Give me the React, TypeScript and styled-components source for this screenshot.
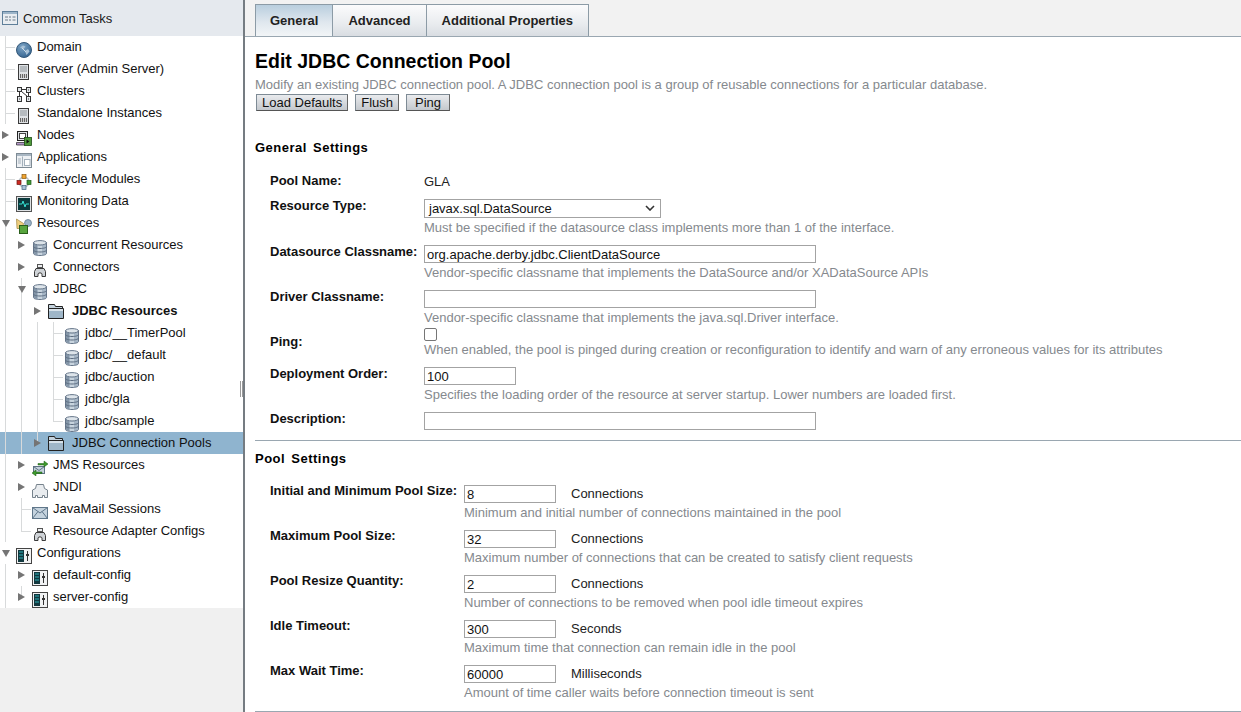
import React from "react";
import styled, { createGlobalStyle } from "styled-components";

const GlobalStyle = createGlobalStyle`
  html, body {
    margin: 0;
    padding: 0;
    height: 100%;
    overflow: hidden;
    background: #fff;
  }
  body {
    font-family: "Liberation Sans", Arial, sans-serif;
    font-size: 13px;
    color: #000;
  }
`;

const Page = styled.div`
  display: flex;
  width: 1241px;
  height: 712px;
  overflow: hidden;
`;

const Sidebar = styled.aside`
  width: 243px;
  flex: none;
  background: #f0f0f0;
  border-right: 2px solid #757c82;
  position: relative;
`;

const Grip = styled.i`
  position: absolute;
  right: 0;
  top: 381px;
  width: 1px;
  height: 16px;
  border-left: 1px solid #9a9a9a;
  border-right: 1px solid #9a9a9a;
  background: #fff;
`;

const TasksHeader = styled.div`
  height: 36px;
  display: flex;
  align-items: center;
  gap: 5px;
  padding-left: 2px;
  background: #e5e9ee;
  color: #1a1a1a;
`;

const Tree = styled.ul`
  list-style: none;
  margin: 0;
  padding: 0;
  background: #fff;
`;

const Row = styled.li<{ $selected?: boolean; $indent: number }>`
  position: relative;
  height: 22px;
  display: flex;
  align-items: flex-start;
  padding-left: ${({ $indent }) => $indent}px;
  background: ${({ $selected }) => ($selected ? "#8fb4cf" : "transparent")};
`;

const RowLabel = styled.span<{ $bold?: boolean; $gap: number }>`
  margin-left: ${({ $gap }) => $gap}px;
  line-height: 21px;
  font-weight: ${({ $bold }) => ($bold ? 700 : 400)};
  color: #111;
  white-space: nowrap;
`;

const IconBox = styled.span<{ $top: number }>`
  width: 16px;
  height: 16px;
  flex: none;
  display: block;
  margin-top: ${({ $top }) => $top}px;
  svg {
    display: block;
  }
`;

const VLine = styled.i<{ $x: number; $half?: boolean }>`
  position: absolute;
  left: ${({ $x }) => $x}px;
  top: 0;
  width: 1px;
  height: ${({ $half }) => ($half ? "11px" : "22px")};
  background: #d8dadb;
`;

const HLine = styled.i<{ $x: number }>`
  position: absolute;
  left: ${({ $x }) => $x}px;
  top: 11px;
  width: 10px;
  height: 1px;
  background: #d8dadb;
`;

const Arrow = styled.i<{ $open?: boolean; $x: number }>`
  position: absolute;
  left: ${({ $x }) => $x}px;
  top: ${({ $open }) => ($open ? "8px" : "7px")};
  width: 0;
  height: 0;
  ${({ $open }) =>
    $open
      ? `border-left: 4px solid transparent;
         border-right: 4px solid transparent;
         border-top: 7px solid #757575;`
      : `border-top: 4px solid transparent;
         border-bottom: 4px solid transparent;
         border-left: 7px solid #757575;`}
`;

const Main = styled.main`
  flex: 1;
  min-width: 0;
`;

const TabBar = styled.div`
  height: 37px;
  box-sizing: border-box;
  padding: 4px 0 0 10px;
  background: #f2f2f2;
  border-bottom: 1px solid #9aa7b1;
  display: flex;
`;

const Tab = styled.div<{ $active?: boolean }>`
  height: 32px;
  box-sizing: border-box;
  padding: 0 ${({ $active }) => ($active ? 14 : 15)}px;
  display: flex;
  align-items: center;
  border: 1px solid #8c9ba6;
  border-bottom: 0;
  border-left-width: ${({ $active }) => ($active ? "1px" : "0")};
  font-size: 13px;
  font-weight: 700;
  color: #222;
  background: ${({ $active }) =>
    $active
      ? "linear-gradient(#b9cede, #dfe7ee 55%, #f2f5f7)"
      : "linear-gradient(#fbfbfc, #e9ecef 60%, #d9dde2)"};
`;

const Content = styled.div`
  padding: 0 0 0 10px;
`;

const Title = styled.h1`
  margin: 0;
  padding-top: 12px;
  height: 40px;
  box-sizing: border-box;
  font-size: 19.5px;
  line-height: 24px;
  font-weight: 700;
  color: #000;
`;

const Help = styled.div`
  font-size: 13px;
  line-height: 15px;
  color: #85898e;
  white-space: nowrap;
`;

const ButtonRow = styled.div`
  display: flex;
  gap: 7px;
  margin-top: 2px;
  padding-left: 1px;
`;

const Button = styled.div<{ $pad: number }>`
  height: 17px;
  box-sizing: border-box;
  padding: 0 ${({ $pad }) => $pad}px;
  display: flex;
  align-items: center;
  border: 1px solid #7e8b95;
  border-right-color: #666;
  border-bottom-color: #555;
  background: linear-gradient(#e9ebee, #c4c8cd);
  color: #111;
  font-size: 13px;
`;

const SectionTitle = styled.h2<{ $top: number }>`
  margin: ${({ $top }) => $top}px 0 0;
  font-size: 13px;
  line-height: 16px;
  font-weight: 700;
  letter-spacing: 0.5px;
  word-spacing: 2px;
  color: #000;
`;

const Rule = styled.hr<{ $top: number }>`
  margin: ${({ $top }) => $top}px 0 0;
  border: 0;
  height: 1px;
  background: #9aa7b1;
`;

const PropList = styled.div<{ $labelWidth: number; $top: number }>`
  display: grid;
  grid-template-columns: ${({ $labelWidth }) => $labelWidth}px 1fr;
  margin: ${({ $top }) => $top}px 0 0 15px;
`;

const PropLabel = styled.div<{ $h: number; $pad?: number }>`
  height: ${({ $h }) => $h}px;
  box-sizing: border-box;
  padding-top: ${({ $pad }) => $pad ?? 0}px;
  font-weight: 700;
  font-size: 13px;
  line-height: 15px;
  color: #111;
  white-space: nowrap;
`;

const PropValue = styled.div<{ $h: number; $pad?: number }>`
  height: ${({ $h }) => $h}px;
  padding-top: ${({ $pad }) => $pad ?? 1}px;
  box-sizing: border-box;
`;

const Plain = styled.div`
  font-size: 13px;
  line-height: 15px;
  color: #222;
`;

const Unit = styled(Plain)`
  margin-top: 1px;
`;

const TextBox = styled.div<{ $w: number; $h?: number }>`
  width: ${({ $w }) => $w}px;
  height: ${({ $h }) => $h ?? 18}px;
  box-sizing: border-box;
  border: 1px solid #a3a3a3;
  background: #fff;
  padding-left: 2px;
  margin-bottom: 2px;
  font-size: 13px;
  line-height: 17px;
  color: #111;
  white-space: nowrap;
`;

const SelectBox = styled(TextBox)`
  display: flex;
  align-items: center;
  justify-content: space-between;
  padding: 0 5px 1px 4px;
  svg {
    display: block;
  }
`;

const CheckBox = styled.div`
  width: 13px;
  height: 13px;
  box-sizing: border-box;
  border: 1px solid #767676;
  border-radius: 2px;
  background: #fff;
  margin-bottom: 1px;
`;

const Inline = styled.div`
  display: flex;
  align-items: flex-start;
  gap: 15px;
`;

const DbIcon = () => (
  <svg width="16" height="16" viewBox="0 0 16 16">
    <path d="M1.500 2.500v11c0 1.200 2.900 2 6.500 2s6.500-.8 6.500-2v-11z" fill="#a6b6c6" stroke="#66768a" />
    <path d="M2 4v9.500l3 1.500V5z" fill="#8496a8" />
    <path d="M6 5.500h4v9.500H6z" fill="#c8d4de" />
    <ellipse cx="8" cy="2.800" rx="6.500" ry="2.200" fill="#dde4ea" stroke="#66768a" />
    <path d="M1.500 6.500c0 1.200 2.900 2 6.500 2s6.500-.8 6.500-2M1.500 10c0 1.200 2.900 2 6.500 2s6.500-.8 6.500-2" fill="none" stroke="#5c6c80" />
  </svg>
);

const Globe = () => (
  <svg width="16" height="16" viewBox="0 0 16 16">
    <defs>
      <radialGradient id="globeFill" cx="0.400" cy="0.300" r="0.800">
        <stop offset="0" stopColor="#7ea5c6" />
        <stop offset="1" stopColor="#2f5f8c" />
      </radialGradient>
    </defs>
    <circle cx="8" cy="8" r="7.500" fill="url(#globeFill)" stroke="#35597a" />
    <path d="M4 5.500l3-2 2.500 1-2 2.500zM9 9l3-2 1.500 2.500-3 3.500z" fill="#a9c2d7" />
    <path d="M6 6l4 4" stroke="#cfdde8" />
  </svg>
);

const Server = () => (
  <svg width="16" height="16" viewBox="0 0 16 16">
    <rect x="2.500" y="0.500" width="10" height="15" fill="#dfe2e5" stroke="#3a3a3a" />
    <path d="M4 3h7M4 5h7M4 7h7" stroke="#8d9499" />
    <rect x="4" y="10" width="7" height="4" fill="#666" />
    <path d="M5.500 10v4M7.500 10v4M9.500 10v4" stroke="#cfcfcf" />
  </svg>
);

const ClustersIcon = () => (
  <svg width="16" height="16" viewBox="0 0 16 16">
    <g fill="#e3e7ea" stroke="#333">
      <rect x="1.500" y="1.500" width="4" height="4" />
      <rect x="10.500" y="1.500" width="4" height="5" />
      <rect x="1.500" y="10.500" width="4" height="5" />
      <rect x="10.500" y="10.500" width="4" height="5" />
    </g>
    <path d="M5.500 3.500h5M3.500 5.500v5M5.500 5.500l6 5M12.500 6.500v4M3 13h1M12 13h1M12 4h1" stroke="#333" fill="none" />
  </svg>
);

const NodesIcon = () => (
  <svg width="16" height="16" viewBox="0 0 16 16">
    <rect x="1.500" y="1.500" width="10" height="9" fill="#dfe3e6" stroke="#222" />
    <rect x="3.500" y="3.500" width="6" height="5" fill="#fff" stroke="#444" />
    <path d="M0.500 12.500h9v2.500h-9z" fill="#b59acb" stroke="#222" strokeWidth="0.700" />
    <rect x="8.500" y="7.500" width="7" height="8" fill="#4f9a3a" stroke="#1d4d16" strokeWidth="0.800" />
    <path d="M10.500 9.500l3 2-3 2z" fill="#111" />
  </svg>
);

const WindowIcon = () => (
  <svg width="16" height="16" viewBox="0 0 16 16">
    <rect x="0.500" y="1.500" width="15" height="14" fill="#eef1f4" stroke="#7e8b95" />
    <rect x="1" y="2" width="14" height="2" fill="#a9b7c3" />
    <path d="M6.500 4.500v10" stroke="#a3b0bb" />
    <path d="M2 7h3M2 9h3M2 11h3" stroke="#a3b0bb" />
    <rect x="8.500" y="7.500" width="5.500" height="6" fill="#fff" stroke="#a3b0bb" />
  </svg>
);

const LifecycleIcon = () => (
  <svg width="16" height="16" viewBox="0 0 16 16">
    <circle cx="8" cy="8" r="5" fill="none" stroke="#b8c0c6" strokeWidth="1.500" />
    <rect x="6" y="0.500" width="4" height="4" fill="#f0a430" stroke="#8a5b10" strokeWidth="0.700" />
    <rect x="1" y="6.500" width="4" height="4" fill="#cc2a22" stroke="#701410" strokeWidth="0.700" />
    <rect x="11" y="6.500" width="4" height="4" fill="#3f9a35" stroke="#1d5a18" strokeWidth="0.700" />
    <rect x="6" y="11.500" width="4" height="4" fill="#a9c2d7" stroke="#40607e" strokeWidth="0.700" />
  </svg>
);

const MonitorIcon = () => (
  <svg width="16" height="16" viewBox="0 0 16 16">
    <rect x="0.500" y="0.500" width="15" height="15" fill="#dfe2e5" stroke="#555" />
    <rect x="2" y="2" width="12" height="12" fill="#0c3a3d" />
    <path d="M3 8h3l1-3 2 6 1-3h3" fill="none" stroke="#35e0d0" />
  </svg>
);

const ResourcesIcon = () => (
  <svg width="16" height="16" viewBox="0 0 16 16">
    <path d="M0.500 1l7 4.500-1 5H1z" fill="#efcf80" stroke="#a2863c" strokeWidth="0.700" />
    <circle cx="12" cy="5" r="3.500" fill="#9ab3c8" stroke="#5d7488" strokeWidth="0.700" />
    <rect x="3.500" y="7.500" width="8" height="8" fill="#58a53e" stroke="#2a5f1b" />
  </svg>
);

const ConnectorIcon = () => (
  <svg width="16" height="16" viewBox="0 0 16 16">
    <rect x="5.500" y="2.500" width="5" height="3" fill="#eceef0" stroke="#555" />
    <path d="M2.500 14.500v-5l1.500-3h8l1.500 3v5h-3.500v-2.500c0-1.500-4-1.500-4 0v2.500z" fill="#cfd3d7" stroke="#3a3a3a" />
  </svg>
);

const FolderIcon = () => (
  <svg width="16" height="16" viewBox="0 0 16 16">
    <path d="M0.500 15V1.500h6l1 2h7v2" fill="#c4d2dd" stroke="#222" />
    <path d="M0.500 15.500V5.500h15v10z" fill="#9fb6c8" stroke="#222" />
    <rect x="1" y="6" width="14" height="2" fill="#d8e2ea" />
  </svg>
);

const JmsIcon = () => (
  <svg width="16" height="16" viewBox="0 0 16 16">
    <rect x="1.500" y="6.500" width="11" height="7" fill="#c5d2dc" stroke="#5f7384" />
    <path d="M1.500 6.500l5.500 4 5.500-4" fill="none" stroke="#5f7384" />
    <path d="M6 3.500h6V1l4 3-4 3V5H6zM10 13.500H4V16l-4-3 4-3v2h6z" fill="#3e9b2c" stroke="#1d5a14" strokeWidth="0.500" />
  </svg>
);

const JndiIcon = () => (
  <svg width="16" height="16" viewBox="0 0 16 16">
    <path d="M0.500 15.500V8l3-1.500 1-4h7l1 4 3 1.500v7.500h-3v-2h-2v2h-5v-2h-2v2z" fill="#e9ecef" stroke="#76828c" />
  </svg>
);

const MailIcon = () => (
  <svg width="16" height="16" viewBox="0 0 16 16">
    <rect x="0.500" y="3.500" width="15" height="11" fill="#c5d3de" stroke="#60778a" />
    <path d="M0.500 3.500L8 9l7.500-5.500M0.500 14.500L6 7.500M15.500 14.500L10 7.500" fill="none" stroke="#60778a" />
  </svg>
);

const ConfigIcon = () => (
  <svg width="16" height="16" viewBox="0 0 16 16">
    <rect x="0.500" y="0.500" width="15" height="15" fill="#f1f2f3" stroke="#444" />
    <rect x="2" y="2" width="6" height="12" fill="#12383f" />
    <path d="M3 4h4M3 7h4M3 10h4" stroke="#2fb0b8" />
    <path d="M11.500 3v10" stroke="#333" />
    <rect x="10" y="6" width="3" height="2" fill="#333" />
  </svg>
);

const TableIcon = () => (
  <svg width="16" height="16" viewBox="0 0 16 16">
    <rect x="0.500" y="1.500" width="15" height="13" fill="#e9edf1" stroke="#5f7f9a" />
    <rect x="1" y="2" width="14" height="2" fill="#9db5c9" />
    <path d="M3 7h3M7 7h2M10.500 7h3M3 10h3M7 10h2M10.500 10h3" stroke="#6b7b88" />
  </svg>
);

type TreeNode = {
  label: string;
  depth: number;
  icon: React.ReactNode;
  iconTop?: number;
  arrow?: "open" | "closed";
  bold?: boolean;
  selected?: boolean;
  lines?: number[];
  halfLines?: number[];
  branch?: number;
};

const nodes: TreeNode[] = [
  { label: "Domain", depth: 0, icon: <Globe />, lines: [5], branch: 5 },
  { label: "server (Admin Server)", depth: 0, icon: <Server />, lines: [5], branch: 5 },
  { label: "Clusters", depth: 0, icon: <ClustersIcon />, lines: [5], branch: 5 },
  { label: "Standalone Instances", depth: 0, icon: <Server />, lines: [5], branch: 5 },
  { label: "Nodes", depth: 0, icon: <NodesIcon />, arrow: "closed" },
  { label: "Applications", depth: 0, icon: <WindowIcon />, arrow: "closed" },
  { label: "Lifecycle Modules", depth: 0, icon: <LifecycleIcon />, lines: [5], branch: 5 },
  { label: "Monitoring Data", depth: 0, icon: <MonitorIcon />, lines: [5], branch: 5 },
  { label: "Resources", depth: 0, icon: <ResourcesIcon />, arrow: "open", lines: [5] },
  { label: "Concurrent Resources", depth: 1, icon: <DbIcon />, arrow: "closed", lines: [5] },
  { label: "Connectors", depth: 1, icon: <ConnectorIcon />, arrow: "closed", lines: [5] },
  { label: "JDBC", depth: 1, icon: <DbIcon />, arrow: "open", lines: [5, 21] },
  { label: "JDBC Resources", depth: 2, icon: <FolderIcon />, iconTop: 3, arrow: "closed", bold: true, lines: [5, 21] },
  { label: "jdbc/__TimerPool", depth: 3, icon: <DbIcon />, lines: [5, 21, 37, 53], branch: 53 },
  { label: "jdbc/__default", depth: 3, icon: <DbIcon />, lines: [5, 21, 37, 53], branch: 53 },
  { label: "jdbc/auction", depth: 3, icon: <DbIcon />, lines: [5, 21, 37, 53], branch: 53 },
  { label: "jdbc/gla", depth: 3, icon: <DbIcon />, lines: [5, 21, 37, 53], branch: 53 },
  { label: "jdbc/sample", depth: 3, icon: <DbIcon />, lines: [5, 21, 37], halfLines: [53], branch: 53 },
  { label: "JDBC Connection Pools", depth: 2, icon: <FolderIcon />, iconTop: 3, arrow: "closed", selected: true, lines: [5, 21], halfLines: [37] },
  { label: "JMS Resources", depth: 1, icon: <JmsIcon />, arrow: "closed", lines: [5] },
  { label: "JNDI", depth: 1, icon: <JndiIcon />, arrow: "closed", lines: [5] },
  { label: "JavaMail Sessions", depth: 1, icon: <MailIcon />, lines: [5, 21], branch: 21 },
  { label: "Resource Adapter Configs", depth: 1, icon: <ConnectorIcon />, lines: [5], halfLines: [21], branch: 21 },
  { label: "Configurations", depth: 0, icon: <ConfigIcon />, arrow: "open" },
  { label: "default-config", depth: 1, icon: <ConfigIcon />, arrow: "closed", lines: [5] },
  { label: "server-config", depth: 1, icon: <ConfigIcon />, arrow: "closed", lines: [5], halfLines: [21] },
];

const indents = [16, 32, 48, 64];
const labelGaps = [5, 5, 8, 5];

const pool = [
  { label: "Initial and Minimum Pool Size:", value: "8", unit: "Connections", help: "Minimum and initial number of connections maintained in the pool" },
  { label: "Maximum Pool Size:", value: "32", unit: "Connections", help: "Maximum number of connections that can be created to satisfy client requests" },
  { label: "Pool Resize Quantity:", value: "2", unit: "Connections", help: "Number of connections to be removed when pool idle timeout expires" },
  { label: "Idle Timeout:", value: "300", unit: "Seconds", help: "Maximum time that connection can remain idle in the pool" },
  { label: "Max Wait Time:", value: "60000", unit: "Milliseconds", help: "Amount of time caller waits before connection timeout is sent" },
];

export default function App() {
  return (
    <Page>
      <GlobalStyle />
      <Sidebar>
        <TasksHeader>
          <TableIcon />
          <span>Common Tasks</span>
        </TasksHeader>
        <Tree>
          {nodes.map((n) => (
            <Row key={n.label} $indent={indents[n.depth]} $selected={n.selected}>
              {n.lines?.map((x) => <VLine key={x} $x={x} />)}
              {n.halfLines?.map((x) => <VLine key={x} $x={x} $half />)}
              {n.branch !== undefined && <HLine $x={n.branch} />}
              {n.arrow && <Arrow $x={indents[n.depth] - 14} $open={n.arrow === "open"} />}
              <IconBox $top={n.iconTop ?? 6}>{n.icon}</IconBox>
              <RowLabel $bold={n.bold} $gap={labelGaps[n.depth]}>
                {n.label}
              </RowLabel>
            </Row>
          ))}
        </Tree>
        <Grip />
      </Sidebar>
      <Main>
        <TabBar>
          <Tab $active>General</Tab>
          <Tab>Advanced</Tab>
          <Tab>Additional Properties</Tab>
        </TabBar>
        <Content>
          <Title>Edit JDBC Connection Pool</Title>
          <Help>
            Modify an existing JDBC connection pool. A JDBC connection pool is a group of reusable connections for a particular database.
          </Help>
          <ButtonRow>
            <Button $pad={5}>Load Defaults</Button>
            <Button $pad={5}>Flush</Button>
            <Button $pad={8}>Ping</Button>
          </ButtonRow>
          <SectionTitle $top={29}>General Settings</SectionTitle>
          <PropList $labelWidth={154} $top={17}>
            <PropLabel $h={25}>Pool Name:</PropLabel>
            <PropValue $h={25}>
              <Plain>GLA</Plain>
            </PropValue>
            <PropLabel $h={46}>Resource Type:</PropLabel>
            <PropValue $h={46}>
              <SelectBox $w={237} $h={19}>
                javax.sql.DataSource
                <svg width="10" height="6" viewBox="0 0 10 6">
                  <path d="M1 1l4 4 4-4" fill="none" stroke="#333" strokeWidth="1.600" />
                </svg>
              </SelectBox>
              <Help>Must be specified if the datasource class implements more than 1 of the interface.</Help>
            </PropValue>
            <PropLabel $h={45}>Datasource Classname:</PropLabel>
            <PropValue $h={45}>
              <TextBox $w={392}>org.apache.derby.jdbc.ClientDataSource</TextBox>
              <Help>Vendor-specific classname that implements the DataSource and/or XADataSource APIs</Help>
            </PropValue>
            <PropLabel $h={38}>Driver Classname:</PropLabel>
            <PropValue $h={38}>
              <TextBox $w={392} />
              <Help>Vendor-specific classname that implements the java.sql.Driver interface.</Help>
            </PropValue>
            <PropLabel $h={39} $pad={7}>Ping:</PropLabel>
            <PropValue $h={39}>
              <CheckBox />
              <Help>When enabled, the pool is pinged during creation or reconfiguration to identify and warn of any erroneous values for its attributes</Help>
            </PropValue>
            <PropLabel $h={45}>Deployment Order:</PropLabel>
            <PropValue $h={45}>
              <TextBox $w={92}>100</TextBox>
              <Help>Specifies the loading order of the resource at server startup. Lower numbers are loaded first.</Help>
            </PropValue>
            <PropLabel $h={29}>Description:</PropLabel>
            <PropValue $h={29}>
              <TextBox $w={392} />
            </PropValue>
          </PropList>
          <Rule $top={0} />
          <SectionTitle $top={10}>Pool Settings</SectionTitle>
          <PropList $labelWidth={194} $top={16}>
            {pool.map((p) => (
              <React.Fragment key={p.label}>
                <PropLabel $h={45}>{p.label}</PropLabel>
                <PropValue $h={45} $pad={2}>
                  <Inline>
                    <TextBox $w={92}>{p.value}</TextBox>
                    <Unit>{p.unit}</Unit>
                  </Inline>
                  <Help>{p.help}</Help>
                </PropValue>
              </React.Fragment>
            ))}
          </PropList>
          <Rule $top={3} />
        </Content>
      </Main>
    </Page>
  );
}
